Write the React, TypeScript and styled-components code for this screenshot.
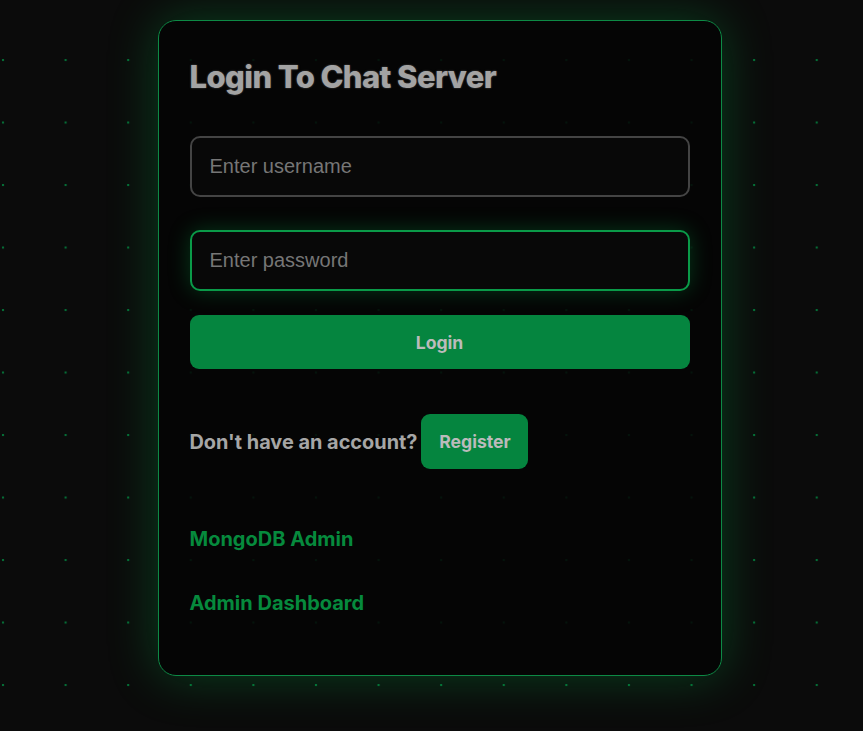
import styled, { createGlobalStyle } from 'styled-components'

const GlobalStyle = createGlobalStyle`
  html, body {
    margin: 0;
    padding: 0;
    background-color: #0b0b0b;
  }
  body {
    font-family: Inter, 'Liberation Sans', sans-serif;
    background-image: radial-gradient(circle at 3px 1px, rgba(0, 190, 90, 0.55) 1px, transparent 1.6px);
    background-size: 62.6px 62.5px;
    background-position: 0 59px;
    min-height: 731px;
  }
`

const Page = styled.main`
  display: flex;
  justify-content: center;
  padding: 20px 0 0 16px;
  box-sizing: border-box;
`

const Card = styled.section`
  width: 564px;
  height: 656px;
  box-sizing: border-box;
  padding: 32px 31px;
  border: 1px solid #0d8a45;
  border-radius: 18px;
  background: rgba(5, 5, 5, 0.85);
  box-shadow: 0 0 50px rgba(0, 190, 75, 0.3);
  display: flex;
  flex-direction: column;
`

const Title = styled.h1`
  margin: 6px 0 0;
  font-size: 31px;
  line-height: 36px;
  font-weight: 800;
  letter-spacing: -0.6px;
  color: #a3a3a3;
  text-shadow: 0 0 2px rgba(160, 160, 160, 0.5);
`

const Field = styled.input<{ $active?: boolean }>`
  width: 100%;
  height: 61px;
  box-sizing: border-box;
  padding: 0 18px;
  border-radius: 10px;
  border: 2px solid ${({ $active }) => ($active ? '#0a9a48' : '#444')};
  background: #080808;
  font-family: 'Liberation Sans', Arial, sans-serif;
  font-size: 20px;
  color: #ccc;
  outline: none;
  box-shadow: ${({ $active }) => ($active ? '0 0 22px rgba(0, 170, 70, 0.3)' : 'none')};
  &::placeholder {
    color: #767676;
  }
`

const Form = styled.form`
  display: flex;
  flex-direction: column;
  gap: 33px;
  margin-top: 41px;
`

const Button = styled.button<{ $wide?: boolean }>`
  border: none;
  border-radius: 9px;
  background: #05853f;
  color: #bbbbbb;
  font-family: Inter, 'Liberation Sans', sans-serif;
  font-size: 17.6px;
  font-weight: 700;
  height: ${({ $wide }) => ($wide ? '54px' : '55px')};
  width: ${({ $wide }) => ($wide ? '100%' : '107px')};
  cursor: pointer;
`

const LoginButton = styled(Button)`
  margin-top: 24px;
`

const RegisterRow = styled.div`
  display: flex;
  align-items: center;
  gap: 4px;
  margin-top: 45px;
  font-size: 19.9px;
  font-weight: 700;
  color: #a6a6a6;
`

const Links = styled.nav`
  display: flex;
  flex-direction: column;
  gap: 40px;
  margin-top: 58px;
`

const AdminLink = styled.a`
  font-size: 20px;
  line-height: 24px;
  font-weight: 700;
  color: #068a3d;
  text-decoration: none;
`

export default function App() {
  return (
    <>
      <GlobalStyle />
      <Page>
        <Card>
          <Title>Login To Chat Server</Title>
          <Form onSubmit={(e) => e.preventDefault()}>
            <Field type="text" placeholder="Enter username" />
            <Field type="password" placeholder="Enter password" $active />
          </Form>
          <LoginButton $wide>Login</LoginButton>
          <RegisterRow>
            Don't have an account?
            <Button>Register</Button>
          </RegisterRow>
          <Links>
            <AdminLink href="#">MongoDB Admin</AdminLink>
            <AdminLink href="#">Admin Dashboard</AdminLink>
          </Links>
        </Card>
      </Page>
    </>
  )
}
